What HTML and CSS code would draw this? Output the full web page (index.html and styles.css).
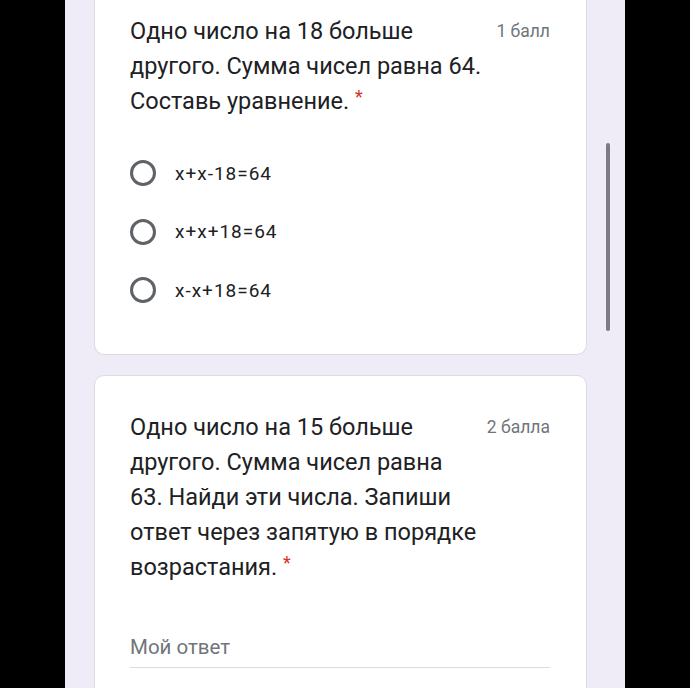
FILE: index.html
```html
<!DOCTYPE html>
<html lang="ru">
<head>
  <meta charset="UTF-8">
  <meta name="viewport" content="width=device-width, initial-scale=1.0">
  <title>Тест</title>
  <link rel="stylesheet" href="styles.css">
</head>
<body>
  <div class="form">
    <div class="card card-first">
      <div class="question-head">
        <div class="question-title">Одно число на 18 больше другого. Сумма чисел равна 64. Составь уравнение. <span class="required">*</span></div>
        <div class="points">1 балл</div>
      </div>
      <div class="options">
        <label class="option"><span class="radio"></span><span class="option-text">x+x-18=64</span></label>
        <label class="option"><span class="radio"></span><span class="option-text">x+x+18=64</span></label>
        <label class="option"><span class="radio"></span><span class="option-text">x-x+18=64</span></label>
      </div>
    </div>

    <div class="card">
      <div class="question-head">
        <div class="question-title">Одно число на 15 больше другого. Сумма чисел равна 63. Найди эти числа. Запиши ответ через запятую в порядке возрастания. <span class="required">*</span></div>
        <div class="points">2 балла</div>
      </div>
      <div class="answer">
        <input type="text" class="answer-input" placeholder="Мой ответ">
      </div>
    </div>

    <div class="scrollbar"></div>
  </div>
</body>
</html>
```

FILE: styles.css
```css
* {
  margin: 0;
  padding: 0;
  box-sizing: border-box;
}

html, body {
  height: 100%;
  overflow: hidden;
}

body {
  background: #000;
  font-family: Roboto, 'Noto Sans', sans-serif;
}

.form {
  position: relative;
  display: flex;
  flex-direction: column;
  width: 560px;
  min-height: 100%;
  margin-left: 65px;
  background: #efebf7;
  padding: 0 38px 0 29px;
}

.card {
  flex-shrink: 0;
  background: #fff;
  border: 1px solid #dadce0;
  border-radius: 10px;
  padding: 34px 36px 40px 35px;
  margin-bottom: 20px;
}

.card-first {
  margin-top: -20px;
  border-top: none;
  border-radius: 0 0 10px 10px;
}

.question-head {
  display: flex;
  align-items: flex-start;
  gap: 10px;
}

.question-title {
  flex: 1;
  font-size: 23.5px;
  line-height: 35px;
  color: #202124;
}

.required {
  color: #d93025;
  font-size: 18px;
  vertical-align: top;
  line-height: 26px;
}

.points {
  margin-left: auto;
  font-size: 17.5px;
  line-height: 35px;
  color: #70757a;
  white-space: nowrap;
}

.options {
  margin-top: 30px;
  display: flex;
  flex-direction: column;
  gap: 10.5px;
}

.option {
  display: flex;
  align-items: center;
  height: 48px;
  gap: 19px;
}

.radio {
  width: 26px;
  height: 26px;
  border: 3px solid #5f6368;
  border-radius: 50%;
  flex-shrink: 0;
}

.option-text {
  font-size: 19px;
  letter-spacing: 1px;
  color: #202124;
}

.answer {
  margin-top: 44px;
}

.answer-input {
  width: 100%;
  border: none;
  border-bottom: 1px solid #dadce0;
  font-family: Roboto, 'Noto Sans', sans-serif;
  font-size: 20.5px;
  padding: 6px 0 8px;
  color: #202124;
  outline: none;
  background: transparent;
}

.answer-input::placeholder {
  color: #70757a;
}

.scrollbar {
  position: absolute;
  top: 143px;
  left: 541px;
  width: 4px;
  height: 188px;
  border-radius: 2px;
  background: #7d7b82;
}
```
